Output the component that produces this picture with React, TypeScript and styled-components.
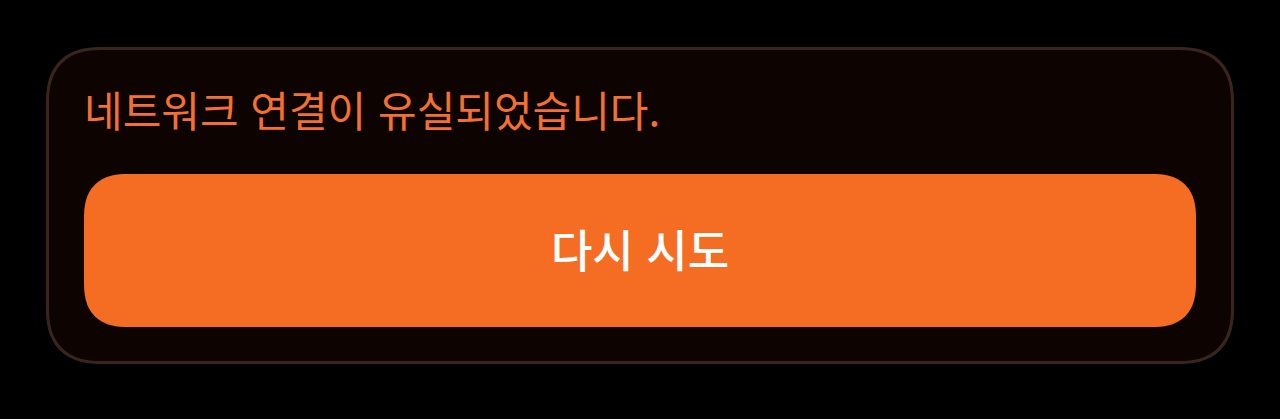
import styled, { createGlobalStyle } from "styled-components";

const GlobalStyle = createGlobalStyle`
  body {
    margin: 0;
    background-color: #000;
    font-family: "Noto Sans CJK KR", "Noto Sans", sans-serif;
  }
`;

const StyledPage = styled.main`
  padding: 47px 46px 55px;
`;

const StyledCard = styled.section`
  display: flex;
  flex-direction: column;
  gap: 35px;
  padding: 28px 35px 34px;
  background-color: #0d0401;
  border: 3px solid #3a251c;
  border-radius: 56px;
  corner-shape: superellipse(1.3);
`;

const StyledMessage = styled.p`
  margin: 0;
  color: #f37032;
  font-size: 42px;
  line-height: 61px;
`;

const StyledRetryButton = styled.button`
  width: 100%;
  padding: 44px 24px 48px;
  border: none;
  border-radius: 44px;
  corner-shape: superellipse(1.3);
  background-color: #f56d22;
  color: #fff;
  font-family: inherit;
  font-size: 45px;
  font-weight: 500;
  line-height: 61px;
  cursor: pointer;
`;

const NetworkError = (props: { message: string; onRetry: () => void }) => {
  return (
    <StyledCard role="alert">
      <StyledMessage>{props.message}</StyledMessage>
      <StyledRetryButton type="button" onClick={props.onRetry}>
        다시 시도
      </StyledRetryButton>
    </StyledCard>
  );
};

export default function App() {
  return (
    <>
      <GlobalStyle />
      <StyledPage lang="ko">
        <NetworkError
          message="네트워크 연결이 유실되었습니다."
          onRetry={() => window.location.reload()}
        />
      </StyledPage>
    </>
  );
}
